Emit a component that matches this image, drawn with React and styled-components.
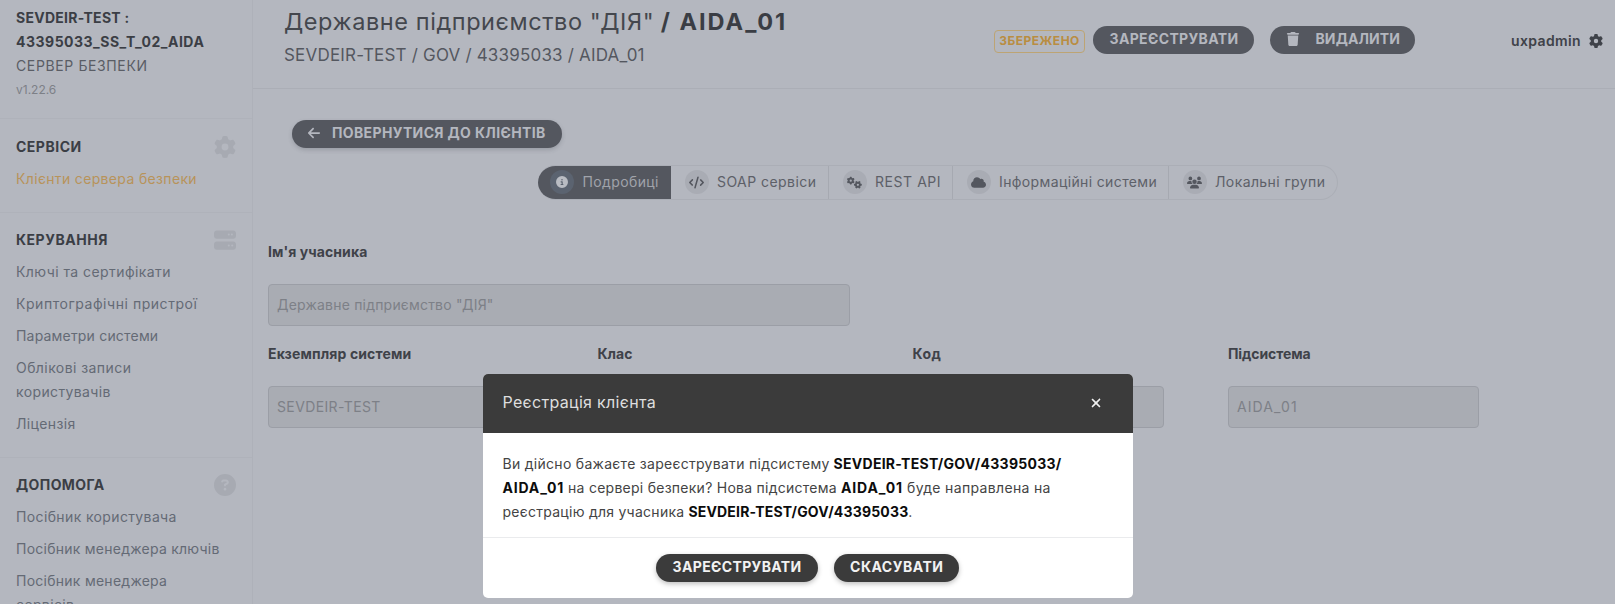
import React from "react";
import styled, { createGlobalStyle, css } from "styled-components";
import {
  FaGear,
  FaServer,
  FaCircleQuestion,
  FaCircleInfo,
  FaCode,
  FaGears,
  FaCloud,
  FaUsers,
  FaTrash,
  FaArrowLeft,
  FaXmark,
} from "react-icons/fa6";

const GlobalStyle = createGlobalStyle`
  *, *::before, *::after { box-sizing: border-box; }
  body {
    margin: 0;
    background: #b4b7bf;
    color: #5a5d65;
    font-family: Inter, "Open Sans", sans-serif;
    font-size: 14px;
    line-height: 24px;
    overflow: hidden;
  }
`;

const Txt = styled.span`
  letter-spacing: ${(p) => p.$ls || 0}px;
  white-space: nowrap;
`;

const Page = styled.div`
  display: flex;
  height: 100vh;
  overflow: hidden;
`;

/* Sidebar */
const Sidebar = styled.aside`
  flex: 0 0 253px;
  border-right: 1px solid #aeb1b9;
  overflow: hidden;
`;

const ServerInfo = styled.div`
  display: flex;
  flex-direction: column;
  height: 118.4px;
  padding: 5.7px 16px 0;
`;

const ServerName = styled.div`
  font-weight: 700;
  color: #3b3e45;
`;

const Version = styled.div`
  font-size: 12px;
  margin-top: 0.6px;
  color: #7d8087;
`;

const Section = styled.section`
  border-top: 1px solid #afb2ba;
  padding: 15.3px 16px 21px 16px;
`;

const SectionHead = styled.div`
  display: flex;
  justify-content: space-between;
  align-items: center;
  height: 24px;
  font-weight: 700;
  color: #3b3e45;

  svg {
    width: 22px;
    height: 22px;
    color: #a7aab2;
  }
`;

const NavLink = styled.a`
  display: block;
  margin-top: 8px;
  color: ${(p) => (p.$active ? "#b8935a" : "#646a75")};
`;

/* Main */
const Main = styled.main`
  flex: 1;
  min-width: 0;
`;

const Header = styled.header`
  display: flex;
  align-items: flex-start;
  height: 88.5px;
  border-bottom: 1px solid #abaeb6;
  padding: 0 12px 0 31px;
`;

const Titles = styled.div`
  width: 710px;
  padding-top: 6.5px;
`;

const Title = styled.h1`
  margin: 0;
  font-size: 23.5px;
  line-height: 30px;
  font-weight: 400;
  white-space: nowrap;
  color: #44474e;

  b { color: #3a3d44; }
`;

const Subtitle = styled.div`
  margin-top: 5.5px;
  font-size: 17px;
  line-height: 26px;
  color: #54575f;
`;

const Badge = styled.div`
  display: flex;
  align-items: center;
  justify-content: center;
  width: 91px;
  height: 23px;
  margin: 30px 8px 0 0;
  padding-bottom: 2px;
  border: 1.5px solid #bda473;
  border-radius: 4px;
  font-size: 12px;
  font-weight: 700;
  color: #b98d42;
`;

const pill = css`
  display: inline-flex;
  align-items: center;
  height: 28px;
  border: 0;
  border-radius: 14px;
  font: inherit;
  font-weight: 700;
  white-space: nowrap;
`;

const Button = styled.button`
  ${pill}
  width: ${(p) => p.$w}px;
  padding: 0 0 2px ${(p) => p.$pad || 16.5}px;
  background: ${(p) => (p.$solid ? "#3b3b3b" : "#54575f")};
  color: ${(p) => (p.$solid ? "#f2f2f2" : "#b4b7bf")};
  box-shadow: ${(p) =>
    p.$flat ? "none" : p.$solid ? "0 2px 5px rgba(0,0,0,.25)" : "0 2px 4px rgba(60,64,75,.22)"};

  svg {
    margin-right: ${(p) => p.$gap || 0}px;
    flex: none;
  }
`;

const HeaderActions = styled.div`
  display: flex;
  gap: 16px;
  padding-top: 26.3px;
`;

const User = styled.div`
  display: flex;
  align-items: center;
  gap: 8px;
  margin: 28.5px 0 0 auto;
  font-weight: 600;
  color: #3f4249;
`;

const Content = styled.div`
  padding: 0 15px;
`;

const BackRow = styled.div`
  padding: 31.5px 0 0 24px;
  height: 76px;
`;

const Tabs = styled.nav`
  display: flex;
  width: 800px;
  height: 35px;
  margin-left: 270px;
  border: 1px solid #abaeb6;
  border-left: 0;
  border-radius: 18px;
  overflow: hidden;
`;

const Tab = styled.a`
  display: flex;
  align-items: center;
  gap: 8.5px;
  flex: none;
  width: ${(p) => p.$w}px;
  padding-left: ${(p) => (p.$active ? 12 : 13.5)}px;
  border-right: ${(p) => (p.$last || p.$active ? "none" : "1px solid #a6a9b1")};
  background: ${(p) => (p.$active ? "#54575f" : "transparent")};
  color: ${(p) => (p.$active ? "#a0a3aa" : "#5d6068")};
`;

const TabIcon = styled.span`
  display: flex;
  align-items: center;
  justify-content: center;
  flex: none;
  width: 24px;
  height: 24px;
  border-radius: 50%;
  background: ${(p) => (p.$active ? "#5b6370" : "#a9acb4")};
  color: ${(p) => (p.$active ? "#b9bcc3" : "#54575f")};
`;

const Form = styled.div`
  display: flex;
  flex-direction: column;
  gap: 15.3px;
  margin-top: 40.3px;
`;

const FieldRow = styled.div`
  display: grid;
  grid-template-columns: ${(p) => p.$cols};
  column-gap: 64px;
`;

const Label = styled.div`
  margin-bottom: 20px;
  font-weight: 700;
  color: #3f4249;
`;

const Input = styled.div`
  display: flex;
  align-items: center;
  height: 42.7px;
  padding: 0 8px;
  border: 1px solid #9b9ea6;
  border-radius: 4px;
  background: #a9acb3;
  color: #7d8087;
`;

/* Dialog */
const Overlay = styled.div`
  position: fixed;
  inset: 0;
  display: flex;
  justify-content: center;
  align-items: flex-end;
  padding: 0 0 6.5px 1px;
`;

const Dialog = styled.div`
  width: 650px;
  height: 224px;
  border-radius: 5px;
  overflow: hidden;
  background: #fff;
  color: #4a4a4a;
`;

const DialogHead = styled.div`
  display: flex;
  align-items: center;
  justify-content: space-between;
  height: 59px;
  padding: 0 30px 2px 19.5px;
  background: #3b3b3b;
  font-size: 16px;
  color: #dedede;

  svg { color: #f0f0f0; margin-top: 2px; }
`;

const DialogBody = styled.div`
  height: 104px;
  padding: 19.5px 19.5px 0;
  white-space: nowrap;
  color: #444;

  b { color: #0c0c0c; }
`;

const DialogFoot = styled.div`
  display: flex;
  justify-content: center;
  gap: 16px;
  height: 61px;
  padding: 16.5px 1px 0 0;
  border-top: 1px solid #eaebed;
`;

const sections = [
  { title: "СЕРВІСИ", ls: 0.5, icon: FaGear, items: [["Клієнти сервера безпеки", 0.35, true]] },
  {
    title: "КЕРУВАННЯ",
    ls: 0.52,
    icon: FaServer,
    items: [
      ["Ключі та сертифікати", 0.43],
      ["Криптографічні пристрої", 0.54],
      ["Параметри системи", 0.19],
      ["Облікові записи", 0.43],
      ["Ліцензія", 0.35],
    ],
  },
  {
    title: "ДОПОМОГА",
    ls: 0.42,
    icon: FaCircleQuestion,
    items: [
      ["Посібник користувача", 0.37],
      ["Посібник менеджера ключів", 0.25],
      ["Посібник менеджера", 0.26],
    ],
  },
];

const continuation = {
  "Облікові записи": "користувачів",
  "Посібник менеджера": "сервісів",
};

const tabs = [
  { label: "Подробиці", w: 133, ls: 0.38, icon: FaCircleInfo, size: 12, active: true },
  { label: "SOAP сервіси", w: 158, ls: 0.45, icon: FaCode, size: 15 },
  { label: "REST API", w: 124, ls: 0.55, icon: FaGears, size: 15 },
  { label: "Інформаційні системи", w: 216, ls: 0.37, icon: FaCloud, size: 15 },
  { label: "Локальні групи", w: 168, ls: 0.4, icon: FaUsers, size: 15, last: true },
];

const fields = [
  { label: "Екземпляр системи", ls: 0.13, value: "SEVDEIR-TEST", vls: 0.38 },
  { label: "Клас", ls: 0, value: "" },
  { label: "Код", ls: 0.5, value: "" },
  { label: "Підсистема", ls: -0.1, value: "AIDA_01", vls: 1.1 },
];

export default function App() {
  return (
    <>
      <GlobalStyle />
      <Page>
        <Sidebar>
          <ServerInfo>
            <ServerName><Txt $ls={0.27}>SEVDEIR-TEST :</Txt></ServerName>
            <ServerName><Txt $ls={0.5}>43395033_SS_T_02_AIDA</Txt></ServerName>
            <Txt $ls={0.62}>СЕРВЕР БЕЗПЕКИ</Txt>
            <Version>v1.22.6</Version>
          </ServerInfo>
          {sections.map((s) => (
            <Section key={s.title}>
              <SectionHead>
                <Txt $ls={s.ls}>{s.title}</Txt>
                <s.icon />
              </SectionHead>
              {s.items.map(([text, ls, active]) => (
                <NavLink key={text} $active={active}>
                  <Txt $ls={ls}>{text}</Txt>
                  {continuation[text] && (
                    <>
                      {" "}
                      <br />
                      <Txt $ls={0.38}>{continuation[text]}</Txt>
                    </>
                  )}
                </NavLink>
              ))}
            </Section>
          ))}
        </Sidebar>

        <Main>
          <Header>
            <Titles>
              <Title>
                <Txt $ls={0.58}>Державне підприємство "ДІЯ"</Txt> <Txt as="b" $ls={2}>/ AIDA_01</Txt>
              </Title>
              <Subtitle><Txt $ls={0.19}>SEVDEIR-TEST / GOV / 43395033 / AIDA_01</Txt></Subtitle>
            </Titles>
            <Badge><Txt $ls={0.5}>ЗБЕРЕЖЕНО</Txt></Badge>
            <HeaderActions>
              <Button $w={161} $flat><Txt $ls={0.35}>ЗАРЕЄСТРУВАТИ</Txt></Button>
              <Button $w={145} $pad={16} $gap={15.5} $flat>
                <FaTrash size={14} />
                <Txt $ls={0.1}>ВИДАЛИТИ</Txt>
              </Button>
            </HeaderActions>
            <User>
              <Txt $ls={0.38}>uxpadmin</Txt>
              <FaGear size={14} />
            </User>
          </Header>

          <Content>
            <BackRow>
              <Button $w={270} $pad={15} $gap={11}>
                <FaArrowLeft size={14} />
                <Txt $ls={0.36}>ПОВЕРНУТИСЯ ДО КЛІЄНТІВ</Txt>
              </Button>
            </BackRow>
            <Tabs>
              {tabs.map((t) => (
                <Tab key={t.label} $w={t.w} $active={t.active} $last={t.last}>
                  <TabIcon $active={t.active}><t.icon size={t.size} /></TabIcon>
                  <Txt $ls={t.ls}>{t.label}</Txt>
                </Tab>
              ))}
            </Tabs>
            <Form>
              <FieldRow $cols="582px">
                <div>
                  <Label><Txt $ls={0.1}>Ім'я учасника</Txt></Label>
                  <Input><Txt $ls={0.2}>Державне підприємство "ДІЯ"</Txt></Input>
                </div>
              </FieldRow>
              <FieldRow $cols="265.5px 251px 251.5px 251px">
                {fields.map((f) => (
                  <div key={f.label}>
                    <Label><Txt $ls={f.ls}>{f.label}</Txt></Label>
                    <Input>{f.value && <Txt $ls={f.vls}>{f.value}</Txt>}</Input>
                  </div>
                ))}
              </FieldRow>
            </Form>
          </Content>
        </Main>
      </Page>

      <Overlay>
        <Dialog role="dialog">
          <DialogHead>
            <Txt $ls={0.32}>Реєстрація клієнта</Txt>
            <FaXmark size={14} />
          </DialogHead>
          <DialogBody>
            <Txt $ls={0.29}>Ви дійсно бажаєте зареєструвати підсистему</Txt>{" "}
            <Txt as="b" $ls={0.27}>SEVDEIR-TEST/GOV/43395033/</Txt>
            <br />
            <Txt as="b" $ls={0.82}>AIDA_01</Txt>{" "}
            <Txt $ls={0.26}>на сервері безпеки? Нова підсистема</Txt>{" "}
            <Txt as="b" $ls={0.9}>AIDA_01</Txt>{" "}
            <Txt $ls={0.34}>буде направлена на</Txt>
            <br />
            <Txt $ls={0.27}>реєстрацію для учасника</Txt>{" "}
            <Txt as="b" $ls={0.18}>SEVDEIR-TEST/GOV/43395033</Txt>.
          </DialogBody>
          <DialogFoot>
            <Button $w={162} $solid><Txt $ls={0.36}>ЗАРЕЄСТРУВАТИ</Txt></Button>
            <Button $w={125} $pad={16} $solid><Txt $ls={0.52}>СКАСУВАТИ</Txt></Button>
          </DialogFoot>
        </Dialog>
      </Overlay>
    </>
  );
}
